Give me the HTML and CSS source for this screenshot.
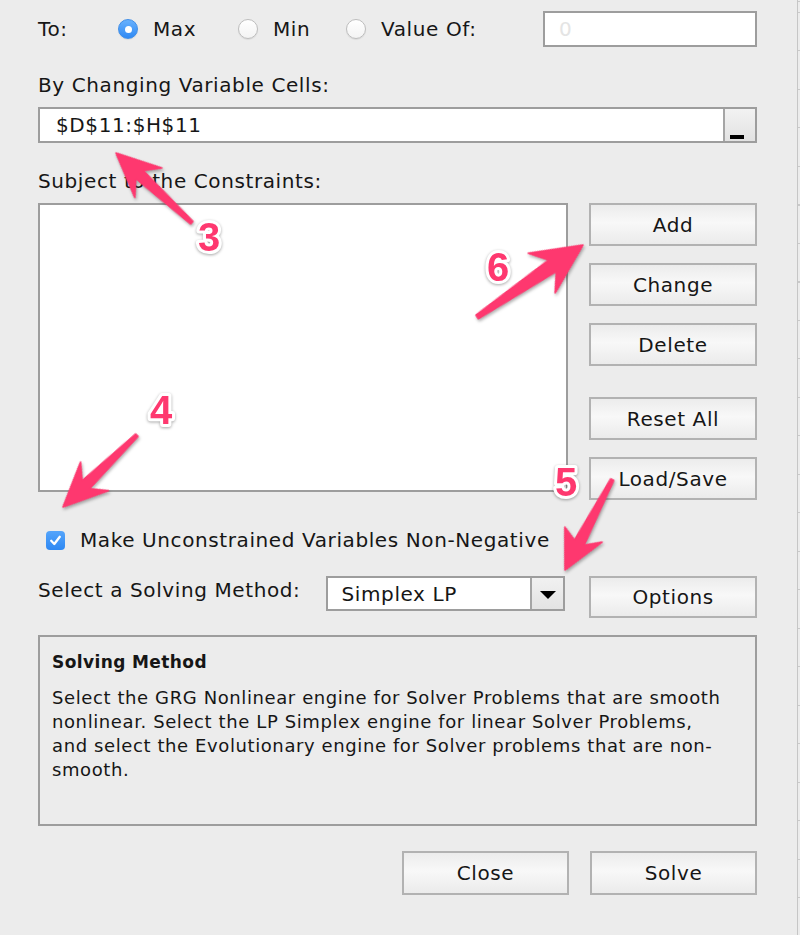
FILE: index.html
```html
<!DOCTYPE html>
<html>
<head>
<meta charset="utf-8">
<link rel="stylesheet" href="styles.css">
</head>
<body>
<div class="page">
  <div class="dialog">
    <div class="row-to">
      <span class="to-label">To:</span>
      <label class="opt opt-max"><span class="radio checked"></span>Max</label>
      <label class="opt opt-min"><span class="radio"></span>Min</label>
      <label class="opt opt-val"><span class="radio"></span>Value Of:</label>
      <div class="value-input"><span class="placeholder">0</span></div>
    </div>

    <div class="label label-changing">By Changing Variable Cells:</div>
    <div class="ref-input">
      <span class="ref-text">$D$11:$H$11</span>
      <span class="ref-btn"><span class="ref-bar"></span></span>
    </div>

    <div class="label label-subject">Subject to the Constraints:</div>
    <div class="constraints">
      <div class="list"></div>
      <div class="btn-col">
        <button class="btn">Add</button>
        <button class="btn">Change</button>
        <button class="btn">Delete</button>
        <button class="btn btn-reset">Reset All</button>
        <button class="btn">Load/Save</button>
      </div>
    </div>

    <div class="check-row">
      <span class="checkbox">
        <svg width="19" height="19" viewBox="0 0 19 19"><path d="M5.2 9.8 L8.3 13 L13.8 5.8" fill="none" stroke="#fff" stroke-width="2.3" stroke-linecap="round" stroke-linejoin="round"/></svg>
      </span>
      <span class="check-label">Make Unconstrained Variables Non-Negative</span>
    </div>

    <div class="method-row">
      <span class="method-label">Select a Solving Method:</span>
      <div class="select">
        <span class="select-text">Simplex LP</span>
        <span class="select-btn"><span class="tri"></span></span>
      </div>
      <button class="btn btn-options">Options</button>
    </div>

    <div class="desc">
      <div class="desc-title">Solving Method</div>
      <p class="desc-text">Select the GRG Nonlinear engine for Solver Problems that are smooth nonlinear. Select the LP Simplex engine for linear Solver Problems, and select the Evolutionary engine for Solver problems that are non-smooth.</p>
    </div>

    <div class="footer">
      <button class="btn btn-foot">Close</button>
      <button class="btn btn-foot">Solve</button>
    </div>
  </div>
  <div class="edge"></div>

  <svg class="annot" width="800" height="935" viewBox="0 0 800 935">
    <g class="arrows">
      <polygon transform="translate(116,153) rotate(-137.4)" points="0,0 -44,-20 -32,-5.5 -103,-1.8 -103,1.8 -32,5.5 -44,20"/>
      <polygon transform="translate(583,245) rotate(-34.2)" points="0,0 -50,-24 -37,-7 -128,-2.2 -128,2.2 -37,7 -50,24"/>
      <polygon transform="translate(63,507) rotate(135.8)" points="0,0 -44,-20 -32,-5.5 -103,-1.8 -103,1.8 -32,5.5 -44,20"/>
      <polygon transform="translate(565,570) rotate(117.6)" points="0,0 -42,-20 -31,-5.5 -102,-1.8 -102,1.8 -31,5.5 -38,20"/>
    </g>
    <g class="nums">
      <text x="209" y="251">3</text>
      <text x="498" y="281">6</text>
      <text x="161" y="424">4</text>
      <text x="566" y="496">5</text>
    </g>
  </svg>
</div>
</body>
</html>
```

FILE: styles.css
```css
* { box-sizing: border-box; }

html, body {
  margin: 0;
  padding: 0;
  background: #ececec;
}

body {
  font-family: "DejaVu Sans", "Liberation Sans", sans-serif;
  font-size: 20px;
  letter-spacing: 0.6px;
  color: #161616;
}

.page {
  position: relative;
  width: 800px;
  height: 935px;
  display: flex;
  overflow: hidden;
}

.dialog {
  width: 797px;
  padding: 11px 40px 0 38px;
}

.edge {
  width: 3px;
  height: 935px;
  border-left: 1px solid #c6c6c6;
  background: repeating-linear-gradient(to bottom, #c9c9c9 0, #c9c9c9 1px, transparent 1px, transparent 38.5px);
  background-position: 0 12px;
}

/* Row 1 */
.row-to {
  display: flex;
  align-items: center;
  height: 36px;
}

.to-label { width: 80px; }

.opt {
  display: flex;
  align-items: center;
  gap: 15px;
}
.opt-max { width: 120px; }
.opt-min { width: 108px; }
.opt-val { flex: 1; }

.radio {
  width: 20px;
  height: 20px;
  border-radius: 50%;
  border: 1px solid #bdbdbd;
  background: linear-gradient(#ffffff, #f3f3f3);
  box-shadow: 0 1px 1px rgba(0,0,0,0.08);
  display: flex;
  align-items: center;
  justify-content: center;
}
.radio.checked {
  border-color: #3f8ee8;
  background: linear-gradient(#68b1fd, #2f89f4);
}
.radio.checked::after {
  content: "";
  width: 7px;
  height: 7px;
  border-radius: 50%;
  background: #fff;
}

.value-input {
  width: 214px;
  height: 36px;
  border: 2px solid #9d9d9d;
  background: #fff;
  padding-left: 14px;
  display: flex;
  align-items: center;
}
.placeholder { color: #e4e4e4; }

/* Labels */
.label { line-height: 24px; }
.label-changing { margin-top: 26px; }
.label-subject { margin-top: 26px; }

.ref-input {
  margin-top: 10px;
  height: 36px;
  border: 2px solid #9d9d9d;
  background: #fff;
  display: flex;
  align-items: stretch;
}
.ref-text {
  flex: 1;
  padding-left: 16px;
  display: flex;
  align-items: center;
}
.ref-btn {
  width: 32px;
  border-left: 2px solid #a5a5a5;
  background: linear-gradient(#f2f2f2, #e2e2e2);
  display: flex;
  align-items: flex-end;
  padding: 0 0 2px 5px;
}
.ref-bar {
  width: 14px;
  height: 4px;
  background: #000;
}

/* Constraints */
.constraints {
  margin-top: 10px;
  display: flex;
  gap: 21px;
  align-items: flex-start;
}
.list {
  width: 531px;
  height: 289px;
  border: 2px solid #9d9d9d;
  background: #fff;
}
.btn-col {
  width: 168px;
  display: flex;
  flex-direction: column;
  gap: 17px;
}

.btn {
  font-family: "DejaVu Sans", "Liberation Sans", sans-serif;
  font-size: 20px;
  letter-spacing: 0.6px;
  color: #161616;
  height: 43px;
  width: 168px;
  border: 2px solid #b2b2b2;
  background: linear-gradient(#ececec 0%, #f8f8f8 45%, #ebebeb 100%);
  padding: 0;
  margin: 0;
  border-radius: 0;
}
.btn-reset { margin-top: 14px; }

/* Checkbox */
.check-row {
  margin-top: 28px;
  height: 24px;
  display: flex;
  align-items: center;
  padding-left: 8px;
  gap: 15px;
}
.checkbox {
  width: 19px;
  height: 19px;
  border-radius: 4px;
  background: linear-gradient(#55a5fb, #2e88f3);
  display: block;
}
.checkbox svg { display: block; }

/* Method row */
.method-row {
  margin-top: 24px;
  display: flex;
  align-items: flex-start;
}
.method-label {
  width: 288px;
  line-height: 24px;
  margin-top: 2px;
}
.select {
  width: 240px;
  height: 35px;
  border: 2px solid #9d9d9d;
  background: #fff;
  display: flex;
}
.select-text {
  flex: 1;
  padding-left: 14px;
  display: flex;
  align-items: center;
}
.select-btn {
  width: 33px;
  border-left: 2px solid #a5a5a5;
  background: linear-gradient(#f1f1f1, #e3e3e3);
  display: flex;
  align-items: center;
  justify-content: center;
}
.tri {
  width: 0;
  height: 0;
  border-left: 8px solid transparent;
  border-right: 8px solid transparent;
  border-top: 8px solid #000;
  margin-top: 3px;
}
.btn-options {
  margin-left: 24px;
  height: 42px;
}

/* Description */
.desc {
  margin-top: 17px;
  height: 191px;
  border: 2px solid #9d9d9d;
  padding: 13px 26px 0 12px;
}
.desc-title {
  font-weight: bold;
  font-size: 17px;
  letter-spacing: 0.4px;
  line-height: 24px;
}
.desc-text {
  margin: 12px 0 0 0;
  font-size: 18px;
  letter-spacing: 0.6px;
  line-height: 24px;
}

/* Footer */
.footer {
  margin-top: 25px;
  display: flex;
  justify-content: flex-end;
  gap: 21px;
}
.btn-foot {
  width: 167px;
  height: 44px;
}

/* Annotations */
.annot {
  position: absolute;
  left: 0;
  top: 0;
  pointer-events: none;
}
.arrows polygon {
  fill: #fe386f;
  stroke: #fe386f;
  stroke-width: 1.5;
  stroke-linejoin: round;
}
.arrows {
  filter: drop-shadow(1px 2px 1.5px rgba(0,0,0,0.3));
}
.nums text {
  font-family: "Liberation Sans", "DejaVu Sans", sans-serif;
  font-weight: bold;
  font-size: 40px;
  letter-spacing: 0;
  fill: #fe386f;
  stroke: #ffffff;
  stroke-width: 6px;
  stroke-linejoin: round;
  paint-order: stroke;
  text-anchor: middle;
}
.nums {
  filter: drop-shadow(0 1.5px 1.5px rgba(0,0,0,0.35));
}
```
